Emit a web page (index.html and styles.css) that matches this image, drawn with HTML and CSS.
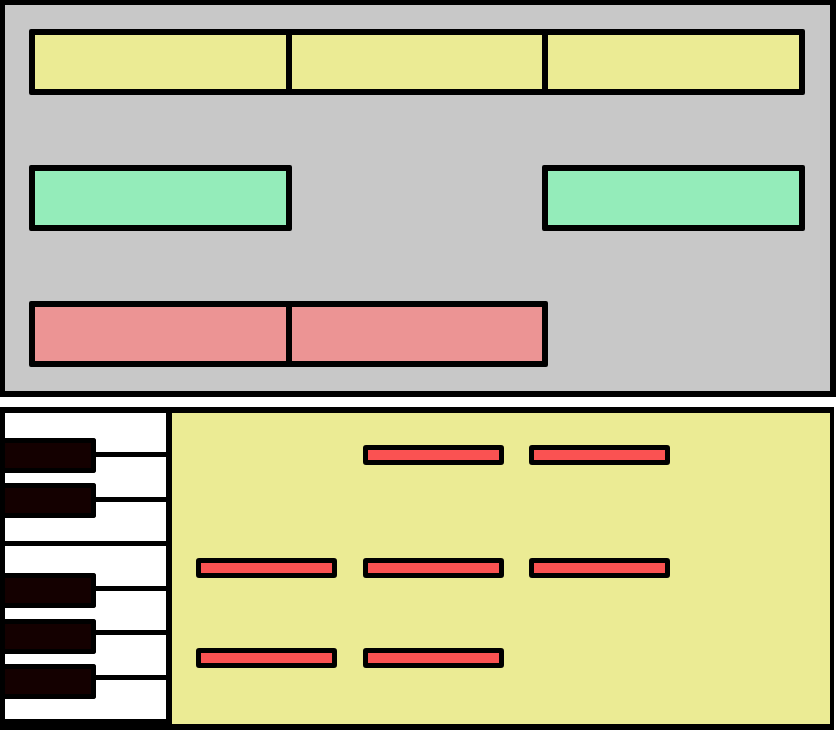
FILE: index.html
```html
<!DOCTYPE html>
<html>
    <head>
        <title>Pattern editor</title>
        <link rel="stylesheet" href="styles.css">
    </head>
    <body>
        <div id="arrangement">
            <div class="clip yellow"></div>
            <div class="clip yellow"></div>
            <div class="clip yellow"></div>

            <div class="clip green"></div>
            <div class="slot"></div>
            <div class="clip green"></div>

            <div class="clip red"></div>
            <div class="clip red"></div>
            <div class="slot"></div>
        </div>

        <div id="editor">
            <div id="keyboard">
                <div class="white-key"></div>
                <div class="white-key"></div>
                <div class="white-key"></div>
                <div class="white-key"></div>
                <div class="white-key"></div>
                <div class="white-key"></div>
                <div class="white-key"></div>

                <div class="black-key key-1"></div>
                <div class="black-key key-2"></div>
                <div class="black-key key-3"></div>
                <div class="black-key key-4"></div>
                <div class="black-key key-5"></div>
            </div>

            <div id="roll">
                <div class="note-row row-1">
                    <div class="slot"></div>
                    <div class="note"></div>
                    <div class="note"></div>
                </div>
                <div class="note-row row-2">
                    <div class="note"></div>
                    <div class="note"></div>
                    <div class="note"></div>
                </div>
                <div class="note-row row-3">
                    <div class="note"></div>
                    <div class="note"></div>
                    <div class="slot"></div>
                </div>
            </div>
        </div>
    </body>
</html>
```

FILE: styles.css
```css
body {
    margin:0;
    padding:0;
    background-color:#FFF;
    font-family:"Liberation Sans", Arial, sans-serif;
}

/* top: arrangement of clips */
#arrangement {
    box-sizing:border-box;
    width:836px;
    height:397px;
    padding:24px 0 0 24px;
    background-color:#C8C8C8;
    border:6px solid #000;
    border-left-width:5px;
    border-top-width:5px;
    display:grid;
    grid-template-columns:repeat(3, 256.67px);
    grid-template-rows:repeat(3, 66px);
    row-gap:70px;
    align-content:start;
}

#arrangement .clip {
    box-sizing:border-box;
    width:calc(100% + 6px);
    height:66px;
    border:6px solid #000;
    border-radius:2px;
}

#arrangement .yellow {
    background-color:#EBEB94;
}

#arrangement .green {
    background-color:#94ECBA;
}

#arrangement .red {
    background-color:#EC9494;
}

/* bottom: piano roll */
#editor {
    box-sizing:border-box;
    width:834px;
    height:323px;
    margin-top:10px;
    border:6px solid #000;
    border-left-width:5px;
    border-right-width:4px;
    display:flex;
}

#keyboard {
    position:relative;
    width:161px;
    flex-shrink:0;
    background-color:#FFF;
    border-right:6px solid #000;
    display:flex;
    flex-direction:column;
}

#keyboard .white-key {
    height:40px;
    border-bottom:5px solid #000;
}

#keyboard .white-key:last-of-type {
    flex:1;
    border-bottom:none;
}

#keyboard .black-key {
    position:absolute;
    left:0;
    width:86px;
    height:25px;
    background-color:#140000;
    border:5px solid #000;
    border-left:none;
    border-radius:0 3px 3px 0;
}

.key-1 { top:25px; }
.key-2 { top:70px; }
.key-3 { top:160px; }
.key-4 { top:206px; }
.key-5 { top:251px; }

#roll {
    flex:1;
    background-color:#EBEB94;
    padding-left:24px;
}

#roll .note-row {
    display:grid;
    grid-template-columns:repeat(3, 141px);
    column-gap:25.5px;
}

#roll .row-1 { margin-top:32px; }
#roll .row-2 { margin-top:93px; }
#roll .row-3 { margin-top:70px; }

#roll .note {
    box-sizing:border-box;
    height:20px;
    background-color:#FA5252;
    border:5px solid #000;
    border-radius:3px;
}

#roll .slot {
    height:20px;
}
```
